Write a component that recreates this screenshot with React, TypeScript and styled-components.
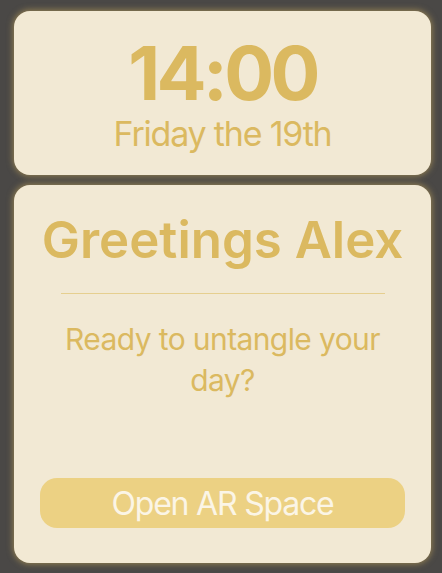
import styled, { createGlobalStyle } from 'styled-components';

const GlobalStyle = createGlobalStyle`
  html, body {
    margin: 0;
    padding: 0;
    background-color: #4a4846;
  }
  body {
    font-family: Inter, "Noto Sans", sans-serif;
  }
`;

const Page = styled.div`
  display: flex;
  flex-direction: column;
  gap: 10px;
  padding: 11px 11px 10px 14px;
  height: 573px;
  box-sizing: border-box;
`;

const Card = styled.div<{ $grow?: boolean }>`
  background-color: #f2e9d4;
  border-radius: 16px;
  box-shadow: 0 0 6px 1px rgba(214, 178, 92, 0.55);
  display: flex;
  flex-direction: column;
  align-items: center;
  box-sizing: border-box;
  flex: ${p => (p.$grow ? '1' : 'none')};
`;

const ClockCard = styled(Card)`
  height: 164px;
  padding-top: 26px;
`;

const Time = styled.div`
  font-size: 74px;
  font-weight: 700;
  color: #dbb960;
  line-height: 72px;
  letter-spacing: -3.6px;
`;

const DateLine = styled.div`
  margin-top: 5px;
  font-size: 34px;
  font-weight: 400;
  color: #dbb960;
  line-height: 40px;
  letter-spacing: -1.2px;
`;

const GreetCard = styled(Card)`
  padding: 23px 20px 35px;
`;

const Greeting = styled.h1`
  margin: 0;
  font-size: 51px;
  font-weight: 600;
  color: #dbb960;
  line-height: 64px;
  letter-spacing: 0px;
  white-space: nowrap;
  text-align: center;
`;

const Divider = styled.hr`
  width: 324px;
  border: none;
  border-top: 1px solid #e6cf8f;
  margin: 21px 0 25px;
`;

const Prompt = styled.p`
  margin: 0;
  font-size: 30px;
  font-weight: 400;
  color: #dbb960;
  line-height: 41px;
  text-align: center;
  letter-spacing: -0.6px;
  width: 340px;
`;

const Spacer = styled.div`
  flex: 1;
`;

const ArButton = styled.button`
  width: 365px;
  height: 50px;
  border: none;
  border-radius: 17px;
  background-color: #ecd183;
  color: #fbf5e6;
  font-family: Inter, "Noto Sans", sans-serif;
  font-size: 32px;
  font-weight: 400;
  letter-spacing: -1.2px;
  padding: 0;
  cursor: pointer;
`;

export default function App() {
  return (
    <>
      <GlobalStyle />
      <Page>
        <ClockCard>
          <Time>14:00</Time>
          <DateLine>Friday the 19th</DateLine>
        </ClockCard>
        <GreetCard $grow>
          <Greeting>Greetings Alex</Greeting>
          <Divider />
          <Prompt>Ready to untangle your day?</Prompt>
          <Spacer />
          <ArButton>Open AR Space</ArButton>
        </GreetCard>
      </Page>
    </>
  );
}
